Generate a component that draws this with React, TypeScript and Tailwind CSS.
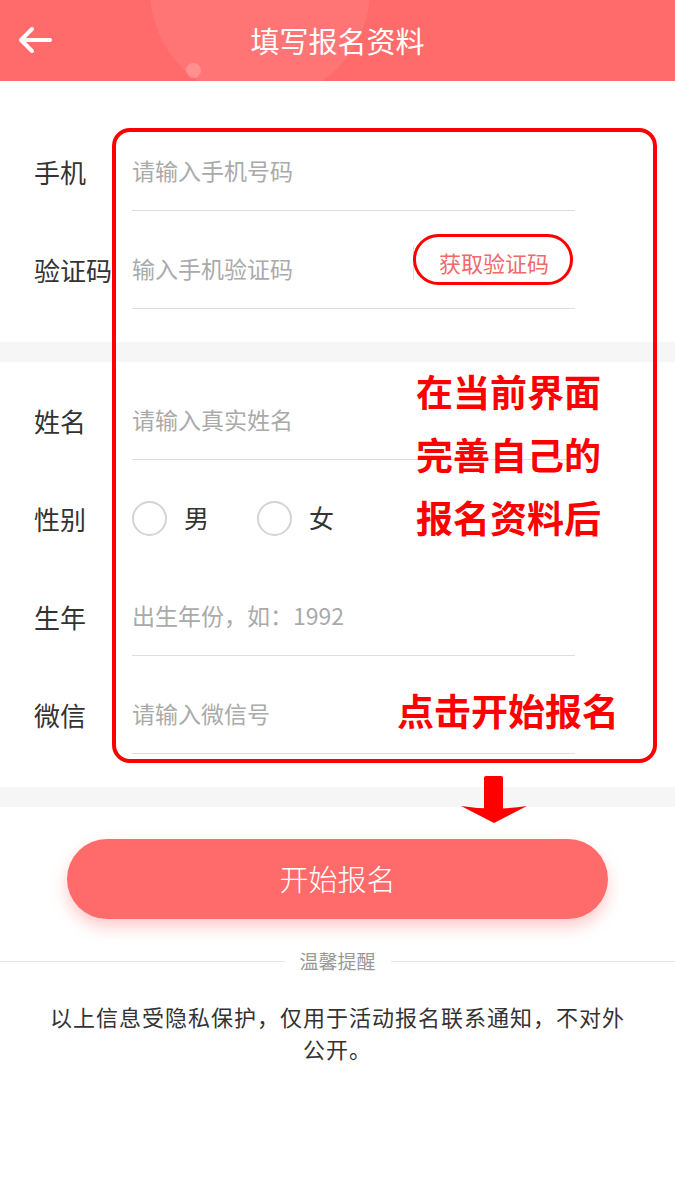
import React, { useState } from 'react';

const cjk = { fontFamily: '"Noto Sans CJK SC", "Noto Sans", sans-serif' };

const Field: React.FC<{ label: string; children: React.ReactNode; line?: boolean }> = ({ label, children, line = true }) => (
    <div className="mt-[21px] flex h-[77px] items-stretch pl-[34px]">
        <div className="flex w-[98px] shrink-0 items-center pb-[3px] text-[26px] text-[#333]">{label}</div>
        <div className={`flex w-[443px] items-center pb-[3px] ${line ? 'border-b border-[#dedede]' : ''}`}>{children}</div>
    </div>
);

const Radio: React.FC<{ label: string; checked: boolean; onClick: () => void }> = ({ label, checked, onClick }) => (
    <button type="button" onClick={onClick} className="flex items-center">
        <span className="flex h-[35px] w-[35px] items-center justify-center rounded-full border-2 border-[#d4d4d4]">
            {checked && <span className="h-[17px] w-[17px] rounded-full bg-[#ff6b6b]" />}
        </span>
        <span className="ml-[17px] text-[25px] text-[#333]">{label}</span>
    </button>
);

const App: React.FC = () => {
    const [sex, setSex] = useState('');
    const [phone, setPhone] = useState('');
    const [code, setCode] = useState('');
    const [name, setName] = useState('');
    const [year, setYear] = useState('');
    const [wechat, setWechat] = useState('');

    const inputCls = 'w-full bg-transparent text-[23px] text-[#333] outline-none placeholder:text-[#aaa]';

    return (
        <div className="relative min-h-[1200px] w-[675px] bg-white" style={cjk}>
            {/* header */}
            <div className="relative flex h-[81px] items-center justify-center overflow-hidden bg-[#ff6b6b]">
                <div className="absolute left-[150px] top-[-120px] h-[220px] w-[220px] rounded-full bg-white/[0.07]" />
                <div className="absolute left-[186px] top-[63px] h-[15px] w-[15px] rounded-full bg-white/20" />
                <button type="button" className="absolute left-[17px] top-[25px]">
                    <svg width="36" height="30" viewBox="0 0 36 30" fill="none" stroke="white" strokeWidth="4" strokeLinecap="round" strokeLinejoin="round">
                        <path d="M33 15H4M15 4L4 15l11 11" />
                    </svg>
                </button>
                <h1 className="relative text-[29px] text-white">填写报名资料</h1>
            </div>

            {/* contact */}
            <div className="pt-[32px] pb-[33px]">
                <Field label="手机">
                    <input className={inputCls} placeholder="请输入手机号码" value={phone} onChange={e => setPhone(e.target.value)} />
                </Field>
                <Field label="验证码">
                    <input className={inputCls} placeholder="输入手机验证码" value={code} onChange={e => setCode(e.target.value)} />
                    <div className="-mt-[12px] flex shrink-0 items-center">
                        <span className="h-[34px] w-px bg-[#e2e2e2]" />
                        <button type="button" className="ml-[25px] mr-[26px] whitespace-nowrap text-[22px] text-[#f06a6a]">获取验证码</button>
                    </div>
                </Field>
            </div>

            <div className="h-[20px] bg-[#f6f6f6]" />

            {/* profile */}
            <div className="pb-[33px]">
                <Field label="姓名">
                    <input className={inputCls} placeholder="请输入真实姓名" value={name} onChange={e => setName(e.target.value)} />
                </Field>
                <Field label="性别" line={false}>
                    <div className="flex items-center gap-[48px]">
                        <Radio label="男" checked={sex === 'm'} onClick={() => setSex('m')} />
                        <Radio label="女" checked={sex === 'f'} onClick={() => setSex('f')} />
                    </div>
                </Field>
                <Field label="生年">
                    <input className={inputCls} placeholder="出生年份，如：1992" value={year} onChange={e => setYear(e.target.value)} />
                </Field>
                <Field label="微信">
                    <input className={inputCls} placeholder="请输入微信号" value={wechat} onChange={e => setWechat(e.target.value)} />
                </Field>
            </div>

            <div className="h-[20px] bg-[#f6f6f6]" />

            <div className="px-[67px] pt-[32px]">
                <button type="button" className="h-[80px] w-full rounded-full bg-[#ff6b6b] text-[29px] font-light text-white shadow-[0_8px_16px_rgba(255,107,107,0.35)]">
                    开始报名
                </button>
            </div>

            <div className="mt-[28px] flex items-center">
                <div className="h-px flex-1 bg-[#e6e6e6]" />
                <span className="px-[15px] text-[19px] text-[#999]">温馨提醒</span>
                <div className="h-px flex-1 bg-[#e6e6e6]" />
            </div>

            <p className="mt-[24px] px-[45px] text-center text-[22px] leading-[32px] tracking-[1px] text-[#333]">
                以上信息受隐私保护，仅用于活动报名联系通知，不对外公开。
            </p>

            {/* annotation overlay */}
            <div className="pointer-events-none absolute left-[112px] top-[128px] h-[635px] w-[545px] rounded-[18px] border-4 border-[#ff0000]" />
            <div className="pointer-events-none absolute left-[413px] top-[234px] h-[51px] w-[160px] rounded-full border-[3px] border-[#ff0000]" />
            <div className="pointer-events-none absolute left-[416px] top-[360px] text-[37px] font-semibold leading-[63px] text-[#ff0000]">
                <div>在当前界面</div>
                <div>完善自己的</div>
                <div>报名资料后</div>
            </div>
            <div className="pointer-events-none absolute left-[397px] top-[679px] text-[37px] font-semibold leading-[63px] text-[#ff0000]">点击开始报名</div>
            <svg className="pointer-events-none absolute left-[460px] top-[775px]" width="68" height="50" viewBox="0 0 68 50">
                <rect x="24" y="1" width="19" height="34" rx="2" fill="#ff0000" />
                <path d="M1 31 Q34 36 67 31 L34 48 Z" fill="#ff0000" />
            </svg>
        </div>
    );
};

export default App;
